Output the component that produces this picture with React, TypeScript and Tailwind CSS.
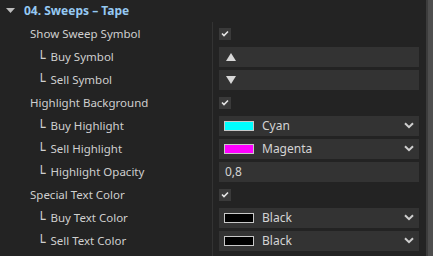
import React from 'react';

type Row =
  | { label: string; child?: boolean; kind: 'check' }
  | { label: string; child?: boolean; kind: 'symbol'; up: boolean }
  | { label: string; child?: boolean; kind: 'color'; swatch: string; name: string }
  | { label: string; child?: boolean; kind: 'text'; value: string };

const ROWS: Row[] = [
  { label: 'Show Sweep Symbol', kind: 'check' },
  { label: 'Buy Symbol', child: true, kind: 'symbol', up: true },
  { label: 'Sell Symbol', child: true, kind: 'symbol', up: false },
  { label: 'Highlight Background', kind: 'check' },
  { label: 'Buy Highlight', child: true, kind: 'color', swatch: '#00ffff', name: 'Cyan' },
  { label: 'Sell Highlight', child: true, kind: 'color', swatch: '#ff00ff', name: 'Magenta' },
  { label: 'Highlight Opacity', child: true, kind: 'text', value: '0,8' },
  { label: 'Special Text Color', kind: 'check' },
  { label: 'Buy Text Color', child: true, kind: 'color', swatch: '#000000', name: 'Black' },
  { label: 'Sell Text Color', child: true, kind: 'color', swatch: '#000000', name: 'Black' },
];

const Check = () => (
  <div className="w-[12px] h-[12px] bg-[#3a3a3a] flex items-center justify-center">
    <svg width="8" height="7" viewBox="0 0 8 7">
      <path d="M1 3.5 L3 5.5 L7 1.5" stroke="#e6e6e6" strokeWidth="1.6" fill="none" />
    </svg>
  </div>
);

const Chevron = () => (
  <svg width="10" height="7" viewBox="0 0 10 7" className="mr-[5px]">
    <path d="M1 1.2 L5 5.2 L9 1.2" stroke="#cfcfcf" strokeWidth="2" fill="none" />
  </svg>
);

const Value: React.FC<{ row: Row }> = ({ row }) => {
  if (row.kind === 'check') return <Check />;
  const box = 'w-[200px] h-[20px] bg-[#333333] flex items-center';
  if (row.kind === 'symbol')
    return (
      <div className={box}>
        <svg width="10" height="8" viewBox="0 0 10 8" className="ml-[7px]">
          {row.up ? <polygon points="5,0 10,8 0,8" fill="#d8d8d8" /> : <polygon points="0,0 10,0 5,8" fill="#d8d8d8" />}
        </svg>
      </div>
    );
  if (row.kind === 'color')
    return (
      <div className={`${box} justify-between`}>
        <div className="flex items-center">
          <div className="ml-[5px] w-[30px] h-[10px] border border-[#c8c8c8]" style={{ backgroundColor: row.swatch }} />
          <span className="ml-[8px] text-[12px] text-[#d4d4d4]">{row.name}</span>
        </div>
        <Chevron />
      </div>
    );
  return (
    <div className={box}>
      <span className="ml-[6px] text-[12px] text-[#d4d4d4]">{row.value}</span>
    </div>
  );
};

export default function App() {
  return (
    <div className="w-[433px] h-[256px] bg-[#232323] flex overflow-hidden" style={{ fontFamily: '"Noto Sans", "Open Sans", sans-serif' }}>
      <div className="flex-1 flex flex-col">
        <div className="h-[22px] flex items-center">
          <svg width="9" height="6" viewBox="0 0 9 6" className="ml-[6px]">
            <polygon points="0,0 9,0 4.5,5" fill="#bdbdbd" />
          </svg>
          <span className="ml-[9px] text-[12px] font-bold text-[#95c9f2]">04. Sweeps – Tape</span>
        </div>
        {ROWS.map((row, i) => (
          <div key={i} className="h-[23px] flex">
            <div className="w-[212px] flex items-center text-[11.5px] text-[#cfcfcf]">
              {row.child ? (
                <span className="ml-[37px] flex items-center">
                  <span className="text-[14px] leading-none relative top-[1px]" style={{ fontFamily: '"DejaVu Sans Mono", monospace' }}>└</span>
                  <span className="ml-[5px]">{row.label}</span>
                </span>
              ) : (
                <span className="ml-[30px]">{row.label}</span>
              )}
            </div>
            <div className="flex-1 border-l border-[#333333] pl-[6px] flex items-center">
              <Value row={row} />
            </div>
          </div>
        ))}
        <div className="flex-1 flex">
          <div className="w-[212px]" />
          <div className="flex-1 border-l border-[#333333]" />
        </div>
      </div>
      <div className="w-[7px] flex">
        <div className="w-[2px] bg-[#3c3c3c]" />
        <div className="flex-1 bg-[#4e4e4e]" />
      </div>
    </div>
  );
}
